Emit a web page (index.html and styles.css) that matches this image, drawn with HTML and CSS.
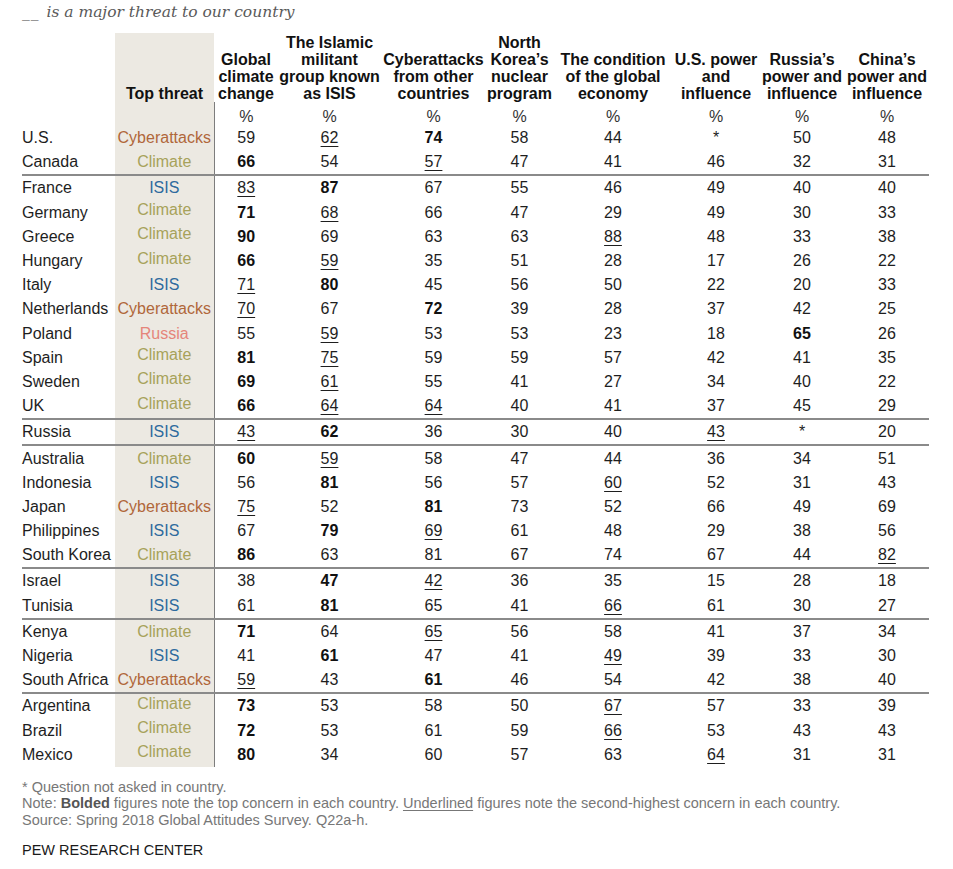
FILE: index.html
```html
<!DOCTYPE html>
<html lang="en">
<head>
<meta charset="utf-8">
<title>__ is a major threat to our country</title>
<link rel="stylesheet" href="styles.css">
</head>
<body>
<div class="page">
  <p class="title"><span class="blank">__</span> is a major threat to our country</p>
  <table class="grid">
    <colgroup>
      <col class="c-country"><col class="c-threat"><col class="c1"><col class="c2"><col class="c3"><col class="c4"><col class="c5"><col class="c6"><col class="c7"><col class="c8">
    </colgroup>
    <thead>
      <tr class="head">
        <th class="country"></th>
        <th class="threat">Top threat</th>
        <th>Global<br>climate<br>change</th>
        <th>The Islamic<br>militant<br>group known<br>as ISIS</th>
        <th>Cyberattacks<br>from other<br>countries</th>
        <th>North<br>Korea’s<br>nuclear<br>program</th>
        <th>The condition<br>of the global<br>economy</th>
        <th>U.S. power<br>and<br>influence</th>
        <th>Russia’s<br>power and<br>influence</th>
        <th>China’s<br>power and<br>influence</th>
      </tr>
      <tr class="pct">
        <td></td><td class="threat"></td><td>%</td><td>%</td><td>%</td><td>%</td><td>%</td><td>%</td><td>%</td><td>%</td>
      </tr>
    </thead>
    <tbody>
      <tr><td class="country">U.S.</td><td class="threat cyb">Cyberattacks</td><td>59</td><td><u>62</u></td><td><b>74</b></td><td>58</td><td>44</td><td>*</td><td>50</td><td>48</td></tr>
      <tr><td class="country">Canada</td><td class="threat cli">Climate</td><td><b>66</b></td><td>54</td><td><u>57</u></td><td>47</td><td>41</td><td>46</td><td>32</td><td>31</td></tr>
    </tbody>
    <tbody>
      <tr><td class="country">France</td><td class="threat isis">ISIS</td><td><u>83</u></td><td><b>87</b></td><td>67</td><td>55</td><td>46</td><td>49</td><td>40</td><td>40</td></tr>
      <tr><td class="country">Germany</td><td class="threat cli"><span class="up">Climate</span></td><td><b>71</b></td><td><u>68</u></td><td>66</td><td>47</td><td>29</td><td>49</td><td>30</td><td>33</td></tr>
      <tr><td class="country">Greece</td><td class="threat cli"><span class="up">Climate</span></td><td><b>90</b></td><td>69</td><td>63</td><td>63</td><td><u>88</u></td><td>48</td><td>33</td><td>38</td></tr>
      <tr><td class="country">Hungary</td><td class="threat cli"><span class="up">Climate</span></td><td><b>66</b></td><td><u>59</u></td><td>35</td><td>51</td><td>28</td><td>17</td><td>26</td><td>22</td></tr>
      <tr><td class="country">Italy</td><td class="threat isis">ISIS</td><td><u>71</u></td><td><b>80</b></td><td>45</td><td>56</td><td>50</td><td>22</td><td>20</td><td>33</td></tr>
      <tr><td class="country">Netherlands</td><td class="threat cyb">Cyberattacks</td><td><u>70</u></td><td>67</td><td><b>72</b></td><td>39</td><td>28</td><td>37</td><td>42</td><td>25</td></tr>
      <tr><td class="country">Poland</td><td class="threat rus">Russia</td><td>55</td><td><u>59</u></td><td>53</td><td>53</td><td>23</td><td>18</td><td><b>65</b></td><td>26</td></tr>
      <tr><td class="country">Spain</td><td class="threat cli"><span class="up">Climate</span></td><td><b>81</b></td><td><u>75</u></td><td>59</td><td>59</td><td>57</td><td>42</td><td>41</td><td>35</td></tr>
      <tr><td class="country">Sweden</td><td class="threat cli"><span class="up">Climate</span></td><td><b>69</b></td><td><u>61</u></td><td>55</td><td>41</td><td>27</td><td>34</td><td>40</td><td>22</td></tr>
      <tr><td class="country">UK</td><td class="threat cli"><span class="up">Climate</span></td><td><b>66</b></td><td><u>64</u></td><td><u>64</u></td><td>40</td><td>41</td><td>37</td><td>45</td><td>29</td></tr>
    </tbody>
    <tbody>
      <tr><td class="country">Russia</td><td class="threat isis">ISIS</td><td><u>43</u></td><td><b>62</b></td><td>36</td><td>30</td><td>40</td><td><u>43</u></td><td>*</td><td>20</td></tr>
    </tbody>
    <tbody>
      <tr><td class="country">Australia</td><td class="threat cli">Climate</td><td><b>60</b></td><td><u>59</u></td><td>58</td><td>47</td><td>44</td><td>36</td><td>34</td><td>51</td></tr>
      <tr><td class="country">Indonesia</td><td class="threat isis">ISIS</td><td>56</td><td><b>81</b></td><td>56</td><td>57</td><td><u>60</u></td><td>52</td><td>31</td><td>43</td></tr>
      <tr><td class="country">Japan</td><td class="threat cyb">Cyberattacks</td><td><u>75</u></td><td>52</td><td><b>81</b></td><td>73</td><td>52</td><td>66</td><td>49</td><td>69</td></tr>
      <tr><td class="country">Philippines</td><td class="threat isis">ISIS</td><td>67</td><td><b>79</b></td><td><u>69</u></td><td>61</td><td>48</td><td>29</td><td>38</td><td>56</td></tr>
      <tr><td class="country">South Korea</td><td class="threat cli">Climate</td><td><b>86</b></td><td>63</td><td>81</td><td>67</td><td>74</td><td>67</td><td>44</td><td><u>82</u></td></tr>
    </tbody>
    <tbody>
      <tr><td class="country">Israel</td><td class="threat isis">ISIS</td><td>38</td><td><b>47</b></td><td><u>42</u></td><td>36</td><td>35</td><td>15</td><td>28</td><td>18</td></tr>
      <tr><td class="country">Tunisia</td><td class="threat isis">ISIS</td><td>61</td><td><b>81</b></td><td>65</td><td>41</td><td><u>66</u></td><td>61</td><td>30</td><td>27</td></tr>
    </tbody>
    <tbody>
      <tr><td class="country">Kenya</td><td class="threat cli">Climate</td><td><b>71</b></td><td>64</td><td><u>65</u></td><td>56</td><td>58</td><td>41</td><td>37</td><td>34</td></tr>
      <tr><td class="country">Nigeria</td><td class="threat isis">ISIS</td><td>41</td><td><b>61</b></td><td>47</td><td>41</td><td><u>49</u></td><td>39</td><td>33</td><td>30</td></tr>
      <tr><td class="country">South Africa</td><td class="threat cyb">Cyberattacks</td><td><u>59</u></td><td>43</td><td><b>61</b></td><td>46</td><td>54</td><td>42</td><td>38</td><td>40</td></tr>
    </tbody>
    <tbody>
      <tr><td class="country">Argentina</td><td class="threat cli"><span class="up">Climate</span></td><td><b>73</b></td><td>53</td><td>58</td><td>50</td><td><u>67</u></td><td>57</td><td>33</td><td>39</td></tr>
      <tr><td class="country">Brazil</td><td class="threat cli"><span class="up">Climate</span></td><td><b>72</b></td><td>53</td><td>61</td><td>59</td><td><u>66</u></td><td>53</td><td>43</td><td>43</td></tr>
      <tr><td class="country">Mexico</td><td class="threat cli"><span class="up">Climate</span></td><td><b>80</b></td><td>34</td><td>60</td><td>57</td><td>63</td><td><u>64</u></td><td>31</td><td>31</td></tr>
    </tbody>
  </table>
  <div class="notes">
    <p>* Question not asked in country.</p>
    <p>Note: <b>Bolded</b> figures note the top concern in each country. <u>Underlined</u> figures note the second-highest concern in each country.</p>
    <p>Source: Spring 2018 Global Attitudes Survey. Q22a-h.</p>
  </div>
  <p class="brand">PEW RESEARCH CENTER</p>
</div>
</body>
</html>
```

FILE: styles.css
```css
html, body {
  margin: 0;
  padding: 0;
  background: #ffffff;
}

.page {
  padding: 0 0 0 22px;
  font-family: "Liberation Sans", Arial, sans-serif;
  color: #1a1a1a;
}

.title {
  margin: 0 0 9px 0;
  font-family: "DejaVu Serif", Georgia, serif;
  font-style: italic;
  font-size: 15.5px;
  line-height: 24px;
  color: #5a5a5a;
}

.blank {
  letter-spacing: 1px;
  margin-right: 2px;
}

.grid {
  border-collapse: collapse;
  border-spacing: 0;
  table-layout: fixed;
  width: 907px;
  font-size: 16px;
}

.c-country { width: 93px; }
.c-threat { width: 99px; }
.c1 { width: 64px; }
.c2 { width: 103px; }
.c3 { width: 105px; }
.c4 { width: 67px; }
.c5 { width: 120px; }
.c6 { width: 86px; }
.c7 { width: 86px; }
.c8 { width: 84px; }

.grid th,
.grid td {
  padding: 0;
  text-align: center;
  white-space: nowrap;
}

.head th {
  height: 69px;
  vertical-align: bottom;
  font-weight: bold;
  line-height: 17px;
  color: #111;
}

.pct td {
  height: 24px;
  vertical-align: bottom;
  line-height: 18px;
  color: #333;
}

.grid tbody td {
  height: 24.2px;
  vertical-align: middle;
  line-height: 18px;
  color: #1e1e1e;
}

.grid tbody + tbody {
  border-top: 2px solid #8a8a8a;
}

.grid td.country,
.grid th.country {
  text-align: left;
}

.threat {
  background: #ece9e2;
}

.pct .threat,
.grid tbody .threat {
  border-right: 1px solid #7d7d7d;
}

.up {
  display: inline-block;
  margin-bottom: 5px;
}

.grid td.cyb { color: #b0673a; }
.grid td.cli { color: #a7a25a; }
.grid td.isis { color: #2e6b9e; }
.grid td.rus { color: #e5857a; }

.grid b {
  font-weight: bold;
  color: #111;
}

.grid u {
  text-decoration: underline;
  text-underline-offset: 3px;
  text-decoration-thickness: 1px;
}

.notes {
  margin-top: 12px;
  font-size: 14.5px;
  line-height: 16.5px;
  color: #777;
}

.notes p {
  margin: 0;
}

.notes b {
  color: #555;
}

.notes u {
  text-underline-offset: 2px;
  text-decoration-thickness: 1px;
}

.brand {
  margin: 14px 0 0 0;
  font-size: 14.5px;
  line-height: 16px;
  color: #1a1a1a;
}
```
